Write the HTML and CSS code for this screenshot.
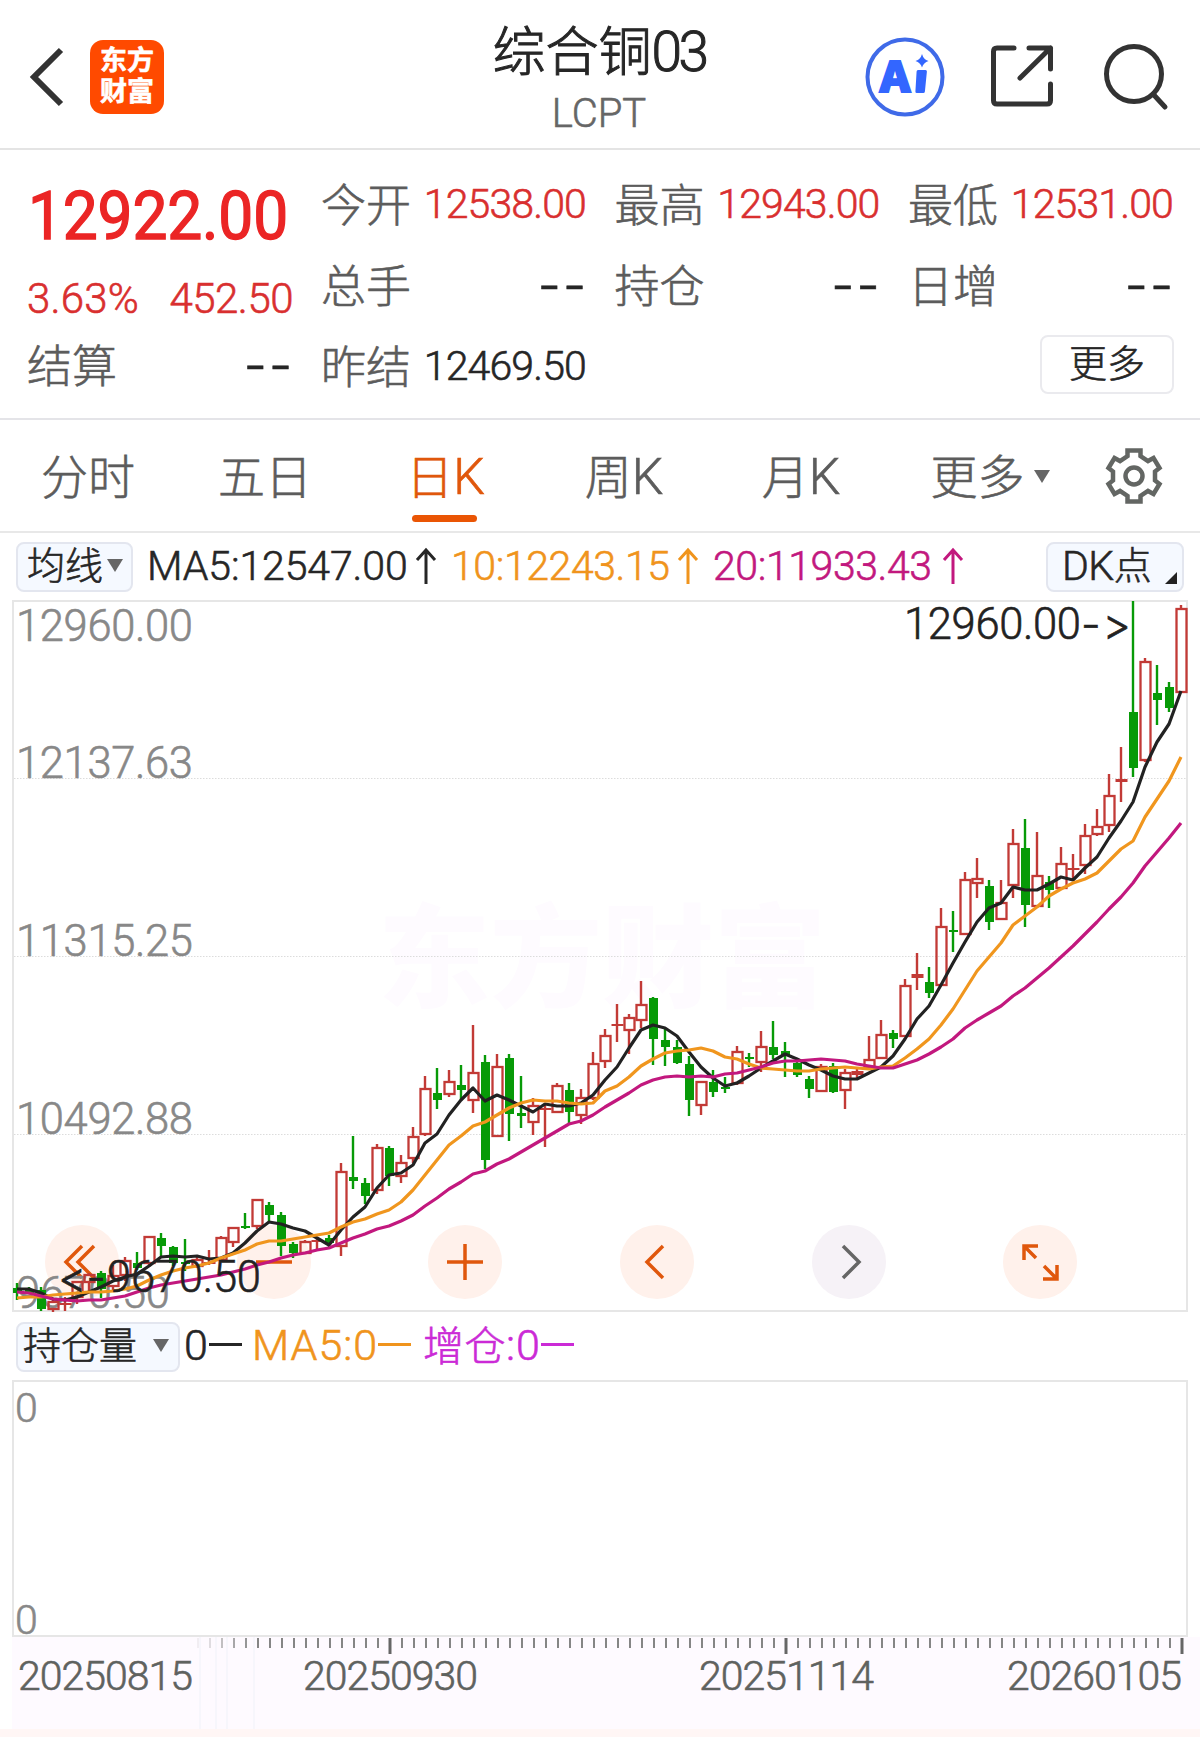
FILE: index.html
```html
<!DOCTYPE html>
<html lang="zh-CN">
<head>
  <meta charset="UTF-8" />
  <meta name="viewport" content="width=device-width, initial-scale=1.0"/>
  <title>综合铜03 LCPT</title>
  <link rel="stylesheet" href="styles.css">
</head>
<body>

  <header class="topbar">
    <div class="topbar-left">
      <svg class="back" width="40" height="66" viewBox="0 0 40 66"><path d="M35 6 L8 33 L35 60"/></svg>
      <div class="logo"><span>东方</span><span>财富</span></div>
    </div>
    <div class="title">
      <h1>综合铜<span class="num">03</span></h1>
      <p>LCPT</p>
    </div>
    <div class="topbar-right">
      <svg width="80" height="80" viewBox="0 0 80 80">
        <circle cx="40" cy="40" r="37.5" fill="none" stroke="#3f6ae8" stroke-width="4"/>
        <text class="ai-text" x="15" y="55" textLength="30" lengthAdjust="spacingAndGlyphs">A</text>
        <path d="M53 33h7.500q1.500 0 1.400 1.500l-2 20q-.2 1.500-1.600 1.500h-6.500q-1.500 0-1.400-1.500l1.200-20q.1-1.500 1.400-1.500z" fill="#3366ff"/>
        <path d="M57 17q1.500 5.500 6.500 7q-5 1.500-6.500 6.500q-1.500-5-6.500-6.500q5-1.500 6.500-7z" fill="#3366ff"/>
      </svg>
      <svg class="line-icon" width="66" height="66" viewBox="0 0 66 66">
        <path d="M25 4H8Q4.500 4 4.500 7.500V56.500Q4.500 60 8 60H58Q61.500 60 61.500 56.500V40M61.500 25V4H40M61.500 4L31 34"/>
      </svg>
      <svg class="line-icon" width="70" height="70" viewBox="0 0 70 70">
        <circle cx="35" cy="32" r="27.500"/><path d="M54 52L66 65"/>
      </svg>
    </div>
  </header>

  <section class="quote">
    <div class="quote-main">
      <div class="price">12922.00</div>
      <div class="change"><span>3.63%</span><span>452.50</span></div>
      <div class="item"><label>结算</label><b class="dash">--</b></div>
    </div>
    <div class="quote-grid">
      <div class="item"><label>今开</label><b class="up">12538.00</b></div>
      <div class="item"><label>最高</label><b class="up">12943.00</b></div>
      <div class="item"><label>最低</label><b class="up">12531.00</b></div>
      <div class="item"><label>总手</label><b class="dash">--</b></div>
      <div class="item"><label>持仓</label><b class="dash">--</b></div>
      <div class="item"><label>日增</label><b class="dash">--</b></div>
      <div class="item"><label>昨结</label><b>12469.50</b></div>
      <div></div>
      <div class="item item-more"><button class="more-btn">更多</button></div>
    </div>
  </section>

  <nav class="tabs">
    <a class="tab">分时</a>
    <a class="tab">五日</a>
    <a class="tab active">日<span class="num">K</span></a>
    <a class="tab">周<span class="num">K</span></a>
    <a class="tab">月<span class="num">K</span></a>
    <a class="tab tab-more">更多<i class="caret"></i></a>
    <svg class="gear" width="60" height="60" viewBox="-30 -30 60 60">
      <path d="M-6.500 -25.500H6.500V-20L14 -15L19.500 -18L25.500 -8L21 -4.500V4.500L25.500 8L19.500 18L14 15L6.500 20V25.500H-6.500V20L-14 15L-19.500 18L-25.500 8L-21 4.500V-4.500L-25.500 -8L-19.500 -18L-14 -15L-6.500 -20Z"/>
      <circle r="8.500"/>
    </svg>
  </nav>

  <div class="indicator">
    <button class="pick pick-ma">均线<i class="caret"></i></button>
    <div class="ma ma5"><span>MA5:12547.00</span><svg class="arrow" width="22" height="38" viewBox="0 0 22 38"><path d="M11 37V3M2 13L11 3L20 13"/></svg></div>
    <div class="ma ma10"><span>10:12243.15</span><svg class="arrow" width="22" height="38" viewBox="0 0 22 38"><path d="M11 37V3M2 13L11 3L20 13"/></svg></div>
    <div class="ma ma20"><span>20:11933.43</span><svg class="arrow" width="22" height="38" viewBox="0 0 22 38"><path d="M11 37V3M2 13L11 3L20 13"/></svg></div>
    <button class="pick pick-dk"><span class="num">DK</span>点<i class="corner"></i></button>
  </div>

  <div class="chart">
    <div class="watermark">东方财富</div>
    <div class="tools">
      <button class="tool"><svg viewBox="-37 -37 74 74"><path d="M0 -16L-16 0L0 16M12 -16L-4 0L12 16"/></svg></button>
      <button class="tool"><svg viewBox="-37 -37 74 74"><path d="M-18 0H18"/></svg></button>
      <button class="tool"><svg viewBox="-37 -37 74 74"><path d="M-18 0H18M0 -18V18"/></svg></button>
      <button class="tool"><svg viewBox="-37 -37 74 74"><path d="M6 -16L-10 0L6 16"/></svg></button>
      <button class="tool disabled"><svg viewBox="-37 -37 74 74"><path d="M-6 -16L10 0L-6 16"/></svg></button>
      <button class="tool"><svg viewBox="-37 -37 74 74"><path d="M-16 -2V-16H-2M-16 -16L-4 -4M17 3V17H3M17 17L4 4"/></svg></button>
    </div>
    <svg id="kline" width="1176" height="712" viewBox="12 600 1176 712"></svg>
  </div>

  <div class="indicator indicator-vol">
    <button class="pick pick-vol">持仓量<i class="caret"></i></button>
    <div class="vol v0">0<i class="bar"></i></div>
    <div class="vol v1">MA5:0<i class="bar"></i></div>
    <div class="vol v2"><em>增仓</em>:0<i class="bar"></i></div>
  </div>

  <div class="volume">
    <span>0</span>
    <span>0</span>
  </div>

  <svg id="axis" width="1188" height="92" viewBox="12 1637 1188 92"></svg>

  <script src="chart.js"></script>
</body>
</html>
```

FILE: styles.css
```css
* {
  box-sizing: border-box;
}
body {
  margin: 0;
  width: 1200px;
  height: 1737px;
  overflow: hidden;
  background: #fff;
  color: #262626;
  font-family: Roboto, "Noto Sans CJK SC", sans-serif;
  -webkit-text-stroke: 0.6px;
  border-bottom: 8px solid #fff6f5;
}
h1, p {
  margin: 0;
  font-weight: 300;
}
button {
  font-family: inherit;
  color: inherit;
  padding: 0;
  background: none;
  border: none;
}
i, em {
  font-style: normal;
}

/* header */
.topbar {
  height: 150px;
  border-bottom: 2px solid #e4e4e4;
  display: grid;
  grid-template-columns: 400px 400px 400px;
}
.topbar-left {
  display: flex;
  align-items: center;
  padding: 5px 0 0 26px;
}
.back path {
  fill: none;
  stroke: #333;
  stroke-width: 6;
}
.logo {
  width: 74px;
  height: 74px;
  margin-left: 24px;
  border-radius: 13px;
  background: #ff4a00;
  color: #fff;
  display: flex;
  flex-direction: column;
  align-items: center;
  justify-content: center;
  font-size: 27px;
  line-height: 31px;
  font-weight: 700;
}
.title {
  text-align: center;
  padding-top: 20px;
}
.title h1 {
  font-size: 53px;
  line-height: 64px;
  height: 64px;
  padding-right: 2px;
  -webkit-text-stroke: 1px;
}
.title h1 .num {
  font-size: 55px;
  letter-spacing: -3.500px;
}
.title p {
  font-size: 40px;
  line-height: 59px;
  padding-right: 2px;
  color: #666;
}
.topbar-right {
  display: flex;
  align-items: center;
  padding: 5px 0 0 65px;
}
.topbar-right .line-icon {
  margin-left: 44px;
}
.ai-text {
  font: 900 42px "Noto Sans CJK SC", sans-serif;
  fill: #3366ff;
  stroke: #3366ff;
  stroke-width: 2;
}
.line-icon path, .line-icon circle {
  fill: none;
  stroke: #333;
  stroke-width: 5;
  stroke-linecap: round;
  stroke-linejoin: round;
}

/* quote */
.quote {
  height: 270px;
  padding: 15px 27px 0;
  border-bottom: 2px solid #e4e4e8;
  display: flex;
  gap: 29px;
}
.quote-main {
  width: 265px;
}
.price {
  height: 99px;
  line-height: 103px;
  font-size: 67px;
  font-weight: 400;
  letter-spacing: -0.200px;
  -webkit-text-stroke: 1.400px;
  padding-left: 1px;
  transform: scaleX(0.93);
  transform-origin: left;
  color: #eb2525;
}
.change {
  height: 62px;
  line-height: 69px;
  display: flex;
  justify-content: space-between;
  font-size: 42px;
  font-weight: 300;
  letter-spacing: 0.200px;
  color: #d92f2f;
}
.change span:last-child {
  letter-spacing: -0.500px;
  margin-right: -1px;
}
.quote-grid {
  display: grid;
  grid-template-columns: 265px 265px 265px;
  grid-auto-rows: 81px;
  column-gap: 28.500px;
}
.item {
  height: 81px;
  display: flex;
  align-items: center;
  justify-content: space-between;
}
.item label {
  font-size: 45px;
  line-height: 60px;
  font-weight: 300;
  color: #5c5c5c;
  padding-top: 2px;
}
.item b {
  font-size: 41px;
  font-weight: 300;
  letter-spacing: -0.850px;
  padding-bottom: 3px;
}
.item .up {
  color: #d92f2f;
}
.item .dash {
  font-family: Inter, sans-serif;
  font-size: 51px;
  letter-spacing: 2px;
  margin-right: -2px;
  padding-bottom: 4px;
}
.item.item-more {
  align-items: flex-start;
  justify-content: flex-end;
}
.more-btn {
  width: 134px;
  height: 59px;
  border: 2px solid #eaeaee;
  border-radius: 8px;
  font-size: 38px;
  font-weight: 300;
  line-height: 50px;
  margin: 8px -1px 0 0;
  padding-bottom: 2px;
}

/* tabs */
.tabs {
  height: 113px;
  border-bottom: 2px solid #e8e8e8;
  display: grid;
  grid-template-columns: 176px 178px 181px 176px 178px 202px 1fr;
  align-items: center;
  color: #5c5c5c;
  font-size: 47px;
  font-weight: 300;
}
.tab {
  position: relative;
  height: 111px;
  line-height: 115px;
  text-align: center;
}
.tab .num {
  font-size: 50px;
  letter-spacing: -2px;
}
.tab.active {
  color: #e0570c;
}
.tab.active::after {
  content: "";
  position: absolute;
  left: 58px;
  bottom: 9px;
  width: 65px;
  height: 7px;
  border-radius: 4px;
  background: #ea5504;
}
.caret {
  display: inline-block;
  border: 8px solid transparent;
  border-top: 13px solid #666;
  border-bottom: 0;
}
.tab-more .caret {
  margin-left: 9px;
  vertical-align: 11px;
}
.gear {
  margin-left: 13px;
}
.gear path, .gear circle {
  fill: none;
  stroke: #636663;
  stroke-width: 4.500;
}

/* indicator rows */
.indicator {
  height: 67px;
  display: flex;
  align-items: center;
  padding: 0 16px;
}
.pick {
  height: 50px;
  border: 2px solid #e3e6ef;
  border-radius: 8px;
  background: #f5f9ff;
  font-size: 38px;
  line-height: 44px;
  font-weight: 300;
  white-space: nowrap;
  display: flex;
  align-items: center;
  padding-left: 9px;
  padding-bottom: 2px;
}
.pick-ma {
  width: 117px;
}
.pick-ma .caret {
  margin-left: 4px;
}
.pick-dk {
  position: relative;
  width: 138px;
  margin-left: auto;
  padding-left: 14px;
}
.pick-dk .num {
  font-size: 41px;
  letter-spacing: -0.500px;
}
.corner {
  position: absolute;
  right: 5px;
  bottom: 6px;
  border-left: 12px solid transparent;
  border-bottom: 12px solid #222;
}
.ma {
  display: flex;
  align-items: center;
  font-size: 41px;
  font-weight: 300;
  padding-bottom: 2px;
}
.ma5 {
  width: 304px;
  margin-left: 14px;
  letter-spacing: -0.100px;
}
.ma10, .ma20 {
  width: 262px;
  letter-spacing: -0.400px;
}
.ma .arrow {
  margin-left: auto;
  margin-right: 14px;
}
.ma20 .arrow {
  margin-right: 11px;
}
.arrow path {
  fill: none;
  stroke: currentColor;
  stroke-width: 3;
}
.ma10, .v1 {
  color: #f0941c;
}
.ma20 {
  color: #c2187e;
}

/* candle chart */
.chart {
  position: relative;
  width: 1176px;
  height: 713px;
  margin-left: 12px;
}
#kline {
  position: absolute;
  left: 0;
  top: 0;
}
.watermark {
  position: absolute;
  left: 366px;
  top: 281px;
  font-size: 112px;
  line-height: 160px;
  font-weight: 900;
  -webkit-text-stroke: 0;
  color: #fefbff;
}
.tools {
  position: absolute;
  left: 33px;
  top: 625px;
  display: flex;
  gap: 117.700px;
}
.tool {
  width: 74px;
  height: 74px;
  border-radius: 50%;
  background: #fff1eb;
}
.tool svg {
  display: block;
}
.tool path {
  fill: none;
  stroke: #e0570c;
  stroke-width: 3.500;
}
.tool.disabled {
  background: #f6f2f7;
}
.tool.disabled path {
  stroke: #666;
}
.axis-label, .mark {
  font-size: 43.500px;
  font-weight: 300;
  fill: #888;
  stroke: #888;
  stroke-width: 0.600px;
}
.mark {
  fill: #222;
  stroke: #222;
}
.pointer {
  font-family: Inter, sans-serif;
  font-feature-settings: "calt" 0;
}
.date {
  font-size: 41px;
  font-weight: 300;
  fill: #5f625f;
  stroke: #5f625f;
  stroke-width: 0.600px;
}
#axis {
  display: block;
  margin-left: 12px;
  background: #fefaff;
}

/* open interest */
.pick-vol {
  width: 164px;
  padding-left: 5px;
}
.pick-vol .caret {
  margin-left: 16px;
}
.vol {
  display: flex;
  align-items: center;
  font-size: 43px;
  font-weight: 300;
  letter-spacing: 1px;
  padding-bottom: 4px;
}
.v0 {
  width: 68px;
  margin-left: 4px;
}
.v1 {
  width: 171px;
}
.v2 {
  color: #cb2ad6;
}
.vol em {
  font-size: 41px;
  letter-spacing: 0.500px;
  margin-top: -4px;
}
.vol .bar {
  width: 33px;
  height: 3px;
  background: currentColor;
}
.volume {
  width: 1176px;
  height: 257px;
  margin-left: 12px;
  border: 2px solid #e6e6e6;
  padding: 3px 1px 0;
  display: flex;
  flex-direction: column;
  justify-content: space-between;
  font-size: 41px;
  font-weight: 300;
  line-height: 46px;
  color: #888;
}
.volume span:last-child {
  margin-bottom: -8px;
}
```

FILE: chart.js
```js
const STEP = 12;
const X0 = 17;
const UP = '#c23a36';
const DOWN = '#079a07';

// high, body top, body bottom, low, direction (1 up, 0 down, 2 up and filled)
const candles = [
  [1283,1288,1293,1300,0],[1287,1289,1293,1294,0],[1287,1290,1309,1311,0],[1300,1302,1309,1312,1],[1297,1303,1303,1311,1],
  [1281,1282,1297,1304,1],[1273,1275,1282,1291,1],[1271,1273,1289,1298,0],[1265,1276,1286,1290,1],[1257,1261,1275,1281,1],
  [1252,1263,1268,1270,0],[1236,1237,1263,1265,1],[1233,1238,1246,1256,0],[1246,1247,1263,1266,0],[1239,1262,1264,1271,0],
  [1256,1260,1266,1268,1],[1250,1262,1263,1265,1],[1236,1238,1260,1262,1],[1227,1228,1242,1247,1],[1213,1226,1227,1229,0],
  [1199,1200,1226,1229,1],[1202,1205,1215,1221,0],[1212,1215,1246,1256,0],[1242,1244,1253,1258,0],[1240,1242,1253,1254,1],
  [1237,1240,1240,1250,1],[1235,1238,1243,1249,0],[1163,1172,1246,1256,1],[1136,1177,1181,1189,0],[1178,1183,1196,1204,0],
  [1144,1148,1190,1194,1],[1146,1148,1176,1186,0],[1155,1163,1176,1183,1],[1127,1137,1158,1163,1],[1076,1089,1134,1136,1],
  [1068,1093,1100,1109,0],[1070,1082,1094,1097,1],[1065,1085,1090,1100,0],[1025,1073,1100,1113,1],[1055,1062,1160,1169,0],
  [1054,1067,1136,1137,1],[1054,1058,1114,1141,0],[1076,1113,1116,1128,0],[1098,1106,1122,1135,1],[1103,1108,1109,1147,1],
  [1083,1086,1112,1113,1],[1083,1090,1112,1123,0],[1089,1098,1115,1124,1],[1052,1064,1098,1100,1],[1029,1036,1061,1068,1],
  [1004,1024,1026,1042,1],[1014,1018,1030,1054,1],[981,1005,1020,1028,1],[997,998,1039,1065,0],[1028,1040,1047,1066,0],
  [1040,1047,1063,1064,0],[1056,1064,1100,1116,0],[1081,1082,1105,1115,1],[1070,1082,1092,1097,0],[1077,1087,1089,1093,0],
  [1046,1052,1083,1085,1],[1053,1057,1059,1067,0],[1031,1047,1062,1072,1],[1021,1047,1055,1059,0],[1042,1051,1056,1077,0],
  [1059,1063,1075,1077,0],[1076,1079,1089,1098,0],[1064,1067,1091,1092,1],[1063,1066,1092,1093,0],[1069,1073,1090,1109,1],
  [1068,1071,1075,1078,2],[1036,1060,1067,1068,1],[1020,1035,1058,1059,1],[1030,1033,1039,1048,0],[979,986,1036,1037,1],
  [953,974,978,990,2],[967,982,993,998,0],[908,927,985,986,1],[911,930,931,952,0],[872,880,934,935,1],
  [858,879,883,898,1],[880,886,922,930,0],[880,903,919,920,1],[829,844,885,898,1],[819,848,905,927,0],
  [832,876,906,908,1],[876,882,890,908,0],[847,864,888,890,1],[854,868,868,878,1],[824,836,865,874,1],
  [809,827,834,836,1],[774,796,825,832,1],[747,779,782,802,2],[601,712,768,777,0],[658,662,760,762,1],
  [665,693,700,725,0],[682,687,708,712,0],[605,609,692,693,1]
];

const ma5 = [1289,1289,1293,1299,1300,1297,1292,1287,1281,1277,1274,1266,1257,1256,1257,1256,1259,1258,1253,1243,1231,1222,1224,1228,1231,1238,1245,1230,1217,1207,1188,1175,1173,1165,1143,1134,1115,1100,1088,1101,1095,1100,1106,1112,1104,1106,1106,1103,1095,1080,1067,1048,1030,1025,1028,1036,1052,1067,1078,1086,1083,1076,1068,1061,1054,1059,1065,1070,1076,1079,1079,1073,1067,1056,1039,1019,1006,985,963,942,922,908,903,887,890,890,884,877,880,868,857,838,821,802,767,742,724,691];
const ma10 = [1298,1297,1297,1295,1294,1293,1292,1292,1291,1289,1286,1280,1275,1271,1268,1266,1263,1258,1254,1250,1244,1241,1241,1239,1237,1235,1233,1227,1222,1219,1214,1210,1202,1190,1175,1160,1145,1136,1126,1122,1115,1108,1103,1100,1101,1101,1103,1104,1103,1091,1086,1077,1066,1059,1053,1051,1050,1048,1051,1057,1059,1064,1068,1069,1070,1071,1071,1069,1068,1067,1068,1069,1067,1066,1058,1049,1039,1025,1009,990,971,957,943,925,916,907,896,889,883,879,873,861,849,841,817,799,781,757];
const ma20 = [1292,1293,1296,1299,1300,1301,1300,1300,1298,1296,1292,1288,1285,1283,1281,1279,1277,1275,1272,1269,1265,1262,1258,1255,1253,1250,1248,1243,1238,1234,1229,1226,1221,1215,1206,1198,1189,1182,1174,1171,1164,1159,1152,1145,1138,1131,1124,1121,1115,1107,1100,1093,1085,1080,1077,1076,1077,1076,1077,1074,1073,1070,1067,1063,1061,1061,1060,1059,1060,1061,1064,1066,1068,1068,1064,1060,1054,1047,1039,1028,1020,1013,1006,996,988,978,968,957,946,934,922,909,897,883,866,852,838,823];

function line(x1, y1, x2, y2, color, width, extra = '') {
  return `<line x1="${x1}" y1="${y1}" x2="${x2}" y2="${y2}" stroke="${color}" stroke-width="${width}" ${extra}/>`;
}

function text(cls, x, y, w, str) {
  return `<text class="${cls}" x="${x}" y="${y}" textLength="${w}">${str}</text>`;
}

function candle([high, top, bottom, low, dir], i) {
  const x = X0 + i * STEP;
  if (dir === 1 && bottom - top > 3) {
    return line(x, high, x, top, UP, 2.4) + line(x, bottom, x, low, UP, 2.4) +
      `<rect x="${x - 4.5}" y="${top}" width="10" height="${bottom - top}" fill="none" stroke="${UP}" stroke-width="2.3"/>`;
  }
  const color = dir ? UP : DOWN;
  // flat and filled up bodies are a little wider than the down ones
  const left = dir ? 5.5 : 4;
  return line(x, high, x, low, color, 2.4) +
    `<rect x="${x - left}" y="${top}" width="${dir ? 12 : 9}" height="${Math.max(bottom - top, 2)}" fill="${color}"/>`;
}

function average(values, color) {
  const pts = values.map((y, i) => `${X0 + i * STEP},${y}`).join(' ');
  return `<polyline points="${pts}" fill="none" stroke="${color}" stroke-width="3.2" stroke-linejoin="round"/>`;
}

let out = '<rect x="13" y="601" width="1174" height="710" fill="none" stroke="#e6e6e6" stroke-width="2"/>';
[778.5, 956.5, 1134.5].forEach(y => {
  out += line(14, y, 1186, y, '#dcdcdc', 1, 'stroke-dasharray="1.5 1.5"');
});
out += text('axis-label', 16, 641, 177, '12960.00');
out += text('axis-label', 16, 778, 177, '12137.63');
out += text('axis-label', 16, 956, 177, '11315.25');
out += text('axis-label', 16, 1134, 177, '10492.88');
out += text('axis-label', 16, 1308, 154, '9670.50');
out += candles.map(candle).join('');
out += average(ma5, '#222') + average(ma10, '#f0961e') + average(ma20, '#c2187e');
out += text('mark', 904, 639, 177, '12960.00') + text('mark pointer', 1081, 640, 50, '-&gt;');
out += text('mark pointer', 58, 1293, 48, '&lt;-') + text('mark', 107, 1292, 154, '9670.50');
document.getElementById('kline').innerHTML = out;

// time axis
const fade = [0.1, 0.25, 0.5, 0.7, 0.85];
let axis = '';
[200, 216, 227, 254].forEach(x => { axis += line(x, 1637, x, 1729, '#f5f4fb', 1.5); });
for (let i = 15; i < 98; i++) {
  const major = i === 31 || i === 64 || i === 97;
  const x = X0 + i * STEP + 1;
  const alpha = fade[i - 15] || 1;
  axis += line(x, 1638, x, major ? 1654 : 1648, major ? '#666' : '#858585', major ? 3 : 2, `opacity="${alpha}"`);
}
axis += text('date', 18, 1690, 175, '20250815');
axis += text('date', 303, 1690, 175, '20250930');
axis += text('date', 699, 1690, 175, '20251114');
axis += text('date', 1007, 1690, 175, '20260105');
document.getElementById('axis').innerHTML = axis;
```
